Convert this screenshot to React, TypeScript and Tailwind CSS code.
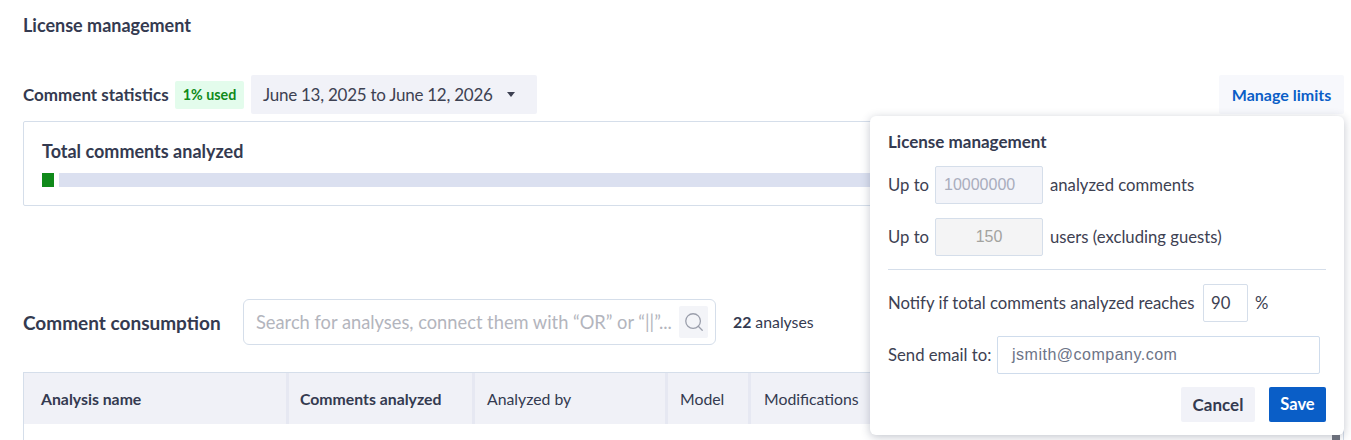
import { Search } from 'lucide-react'

const columns = [
  { label: 'Analysis name', width: 'w-[265px]', pad: 'pl-[17px]', bold: true },
  { label: 'Comments analyzed', width: 'w-[186px]', pad: 'pl-[11px]', bold: true },
  { label: 'Analyzed by', width: 'w-[193px]', pad: 'pl-[12px]', bold: false },
  { label: 'Model', width: 'w-[83px]', pad: 'pl-[12px]', bold: false },
  { label: 'Modifications', width: 'flex-1', pad: 'pl-[13px]', bold: false },
]

function LimitsPopover() {
  return (
    <div className="absolute left-[870px] top-[116px] w-[474px] h-[319px] bg-white rounded-md shadow-[0_2px_10px_rgba(40,50,80,0.28)] px-[18px] pt-[15px] text-[#3d4152]">
      <h3 className="text-[17px] leading-[22px] font-bold text-[#343a50]">License management</h3>
      <div className="flex items-center h-[38px] mt-[13px] text-[16.7px]">
        <span className="w-[47px] pt-[2px]">Up to</span>
        <div className="w-[108px] h-[38px] flex items-center pl-[8px] bg-[#f3f4f9] border border-[#d5deea] rounded-[2px] font-['Liberation_Sans',sans-serif] text-[16px] text-[#a9adbd]">
          10000000
        </div>
        <span className="ml-[7px] pt-[2px]">analyzed comments</span>
      </div>
      <div className="flex items-center h-[38px] mt-[14px] text-[16.7px]">
        <span className="w-[47px] pt-[2px]">Up to</span>
        <div className="w-[108px] h-[38px] flex items-center justify-center bg-[#f4f4f5] border border-[#d5deea] rounded-[2px] font-['Liberation_Sans',sans-serif] text-[16px] text-[#a3a39f]">
          150
        </div>
        <span className="ml-[7px] pt-[2px]">users (excluding guests)</span>
      </div>
      <div className="h-px bg-[#d5deea] mt-[13px]" />
      <div className="flex items-center h-[38px] mt-[14px] text-[16.7px]">
        <span className="w-[315px] pt-[2px]">Notify if total comments analyzed reaches</span>
        <div className="w-[45px] h-[38px] flex items-center pl-[7px] pt-[2px] border border-[#d5deea] rounded-[2px] text-[#3d4152]">
          90
        </div>
        <span className="ml-[7px] pt-[2px]">%</span>
      </div>
      <div className="flex items-center h-[38px] mt-[14px] text-[16.7px]">
        <span className="w-[109px] pt-[2px]">Send email to:</span>
        <div className="w-[323px] h-[38px] flex items-center pl-[14px] border border-[#cfdcec] rounded-[2px] font-['Liberation_Sans',sans-serif] text-[16px] tracking-[0.5px] text-[#6d7487]">
          jsmith@company.com
        </div>
      </div>
      <div className="flex justify-end gap-[14px] mt-[13px]">
        <button className="w-[74px] h-[35px] rounded-[2px] bg-[#f1f2f8] text-[17px] font-bold text-[#343a50]">Cancel</button>
        <button className="w-[57px] h-[35px] rounded-[2px] bg-[#0a5ec7] text-[16.5px] font-bold text-white">Save</button>
      </div>
    </div>
  )
}

export default function App() {
  return (
    <div className="relative w-[1351px] h-[440px] overflow-hidden bg-white font-['Lato',sans-serif] text-[#343a50]">
      <div className="pl-[23px] pr-[7px] pt-[14px]">
        <h1 className="text-[18px] leading-[22px] font-bold">License management</h1>

        <div className="flex items-center h-[39px] mt-[39px]">
          <span className="w-[145px] text-[17px] font-bold whitespace-nowrap">Comment statistics</span>
          <span className="ml-[7px] h-[28px] w-[69px] flex items-center justify-center rounded-[2px] bg-[#e3fcec] text-[14.3px] font-bold text-[#108a1a]">
            1% used
          </span>
          <button className="ml-[7px] h-[39px] w-[286px] flex items-center pl-[12px] rounded-[2px] bg-[#f1f2f8] text-[17px] tracking-[-0.25px] text-[#3d4152]">
            June 13, 2025 to June 12, 2026
            <span className="ml-[14px] w-0 h-0 border-x-[4.5px] border-x-transparent border-t-[5px] border-t-[#3d4152]" />
          </button>
          <button className="ml-auto h-[39px] w-[125px] rounded-[2px] bg-[#f7f8fc] text-[16px] font-bold text-[#0a5ec7]">
            Manage limits
          </button>
        </div>

        <div className="mt-[7px] h-[85px] border border-[#d5deea] rounded-[2px] pl-[18px] pr-[18px] pt-[18px]">
          <div className="text-[18px] leading-[22px] font-bold">Total comments analyzed</div>
          <div className="flex gap-[5px] mt-[11px] h-[14px]">
            <div className="w-[12px] bg-[#108a1a]" />
            <div className="flex-1 bg-[#dbe0f0]" />
          </div>
        </div>

        <div className="flex items-center h-[46px] mt-[93px]">
          <h2 className="text-[19px] font-bold w-[220px] pt-[2px] whitespace-nowrap">Comment consumption</h2>
          <div className="w-[473px] h-[46px] flex items-center border border-[#d5deea] rounded-md pl-[12px] pr-[7px]">
            <span className="flex-1 pt-[2px] text-[18.3px] text-[#b3b5bd] whitespace-nowrap overflow-hidden">Search for analyses, connect them with “OR” or “||”...</span>
            <span className="w-[29px] h-[32px] flex items-center justify-center rounded-[2px] bg-[#f3f4f8]">
              <Search size={22} strokeWidth={1.4} className="text-[#9a9eab]" />
            </span>
          </div>
          <span className="ml-[17px] text-[15.8px]">
            <b className="font-bold">22</b> analyses
          </span>
        </div>

        <div className="mt-[27px] h-[80px] border-x border-t border-[#d5deea]">
          <div className="flex h-[51px] bg-[#f0f1f7]">
            {columns.map((col) => (
              <div
                key={col.label}
                className={`${col.width} ${col.pad} flex items-center border-r-[3px] border-[#e6e8f2] text-[15.8px] whitespace-nowrap ${col.bold ? 'font-bold' : ''}`}
              >
                {col.label}
              </div>
            ))}
          </div>
        </div>
      </div>

      <LimitsPopover />
      <div className="absolute left-[1332px] top-[435px] w-[8px] h-[5px] bg-[#6b6f7b]" />
    </div>
  )
}
